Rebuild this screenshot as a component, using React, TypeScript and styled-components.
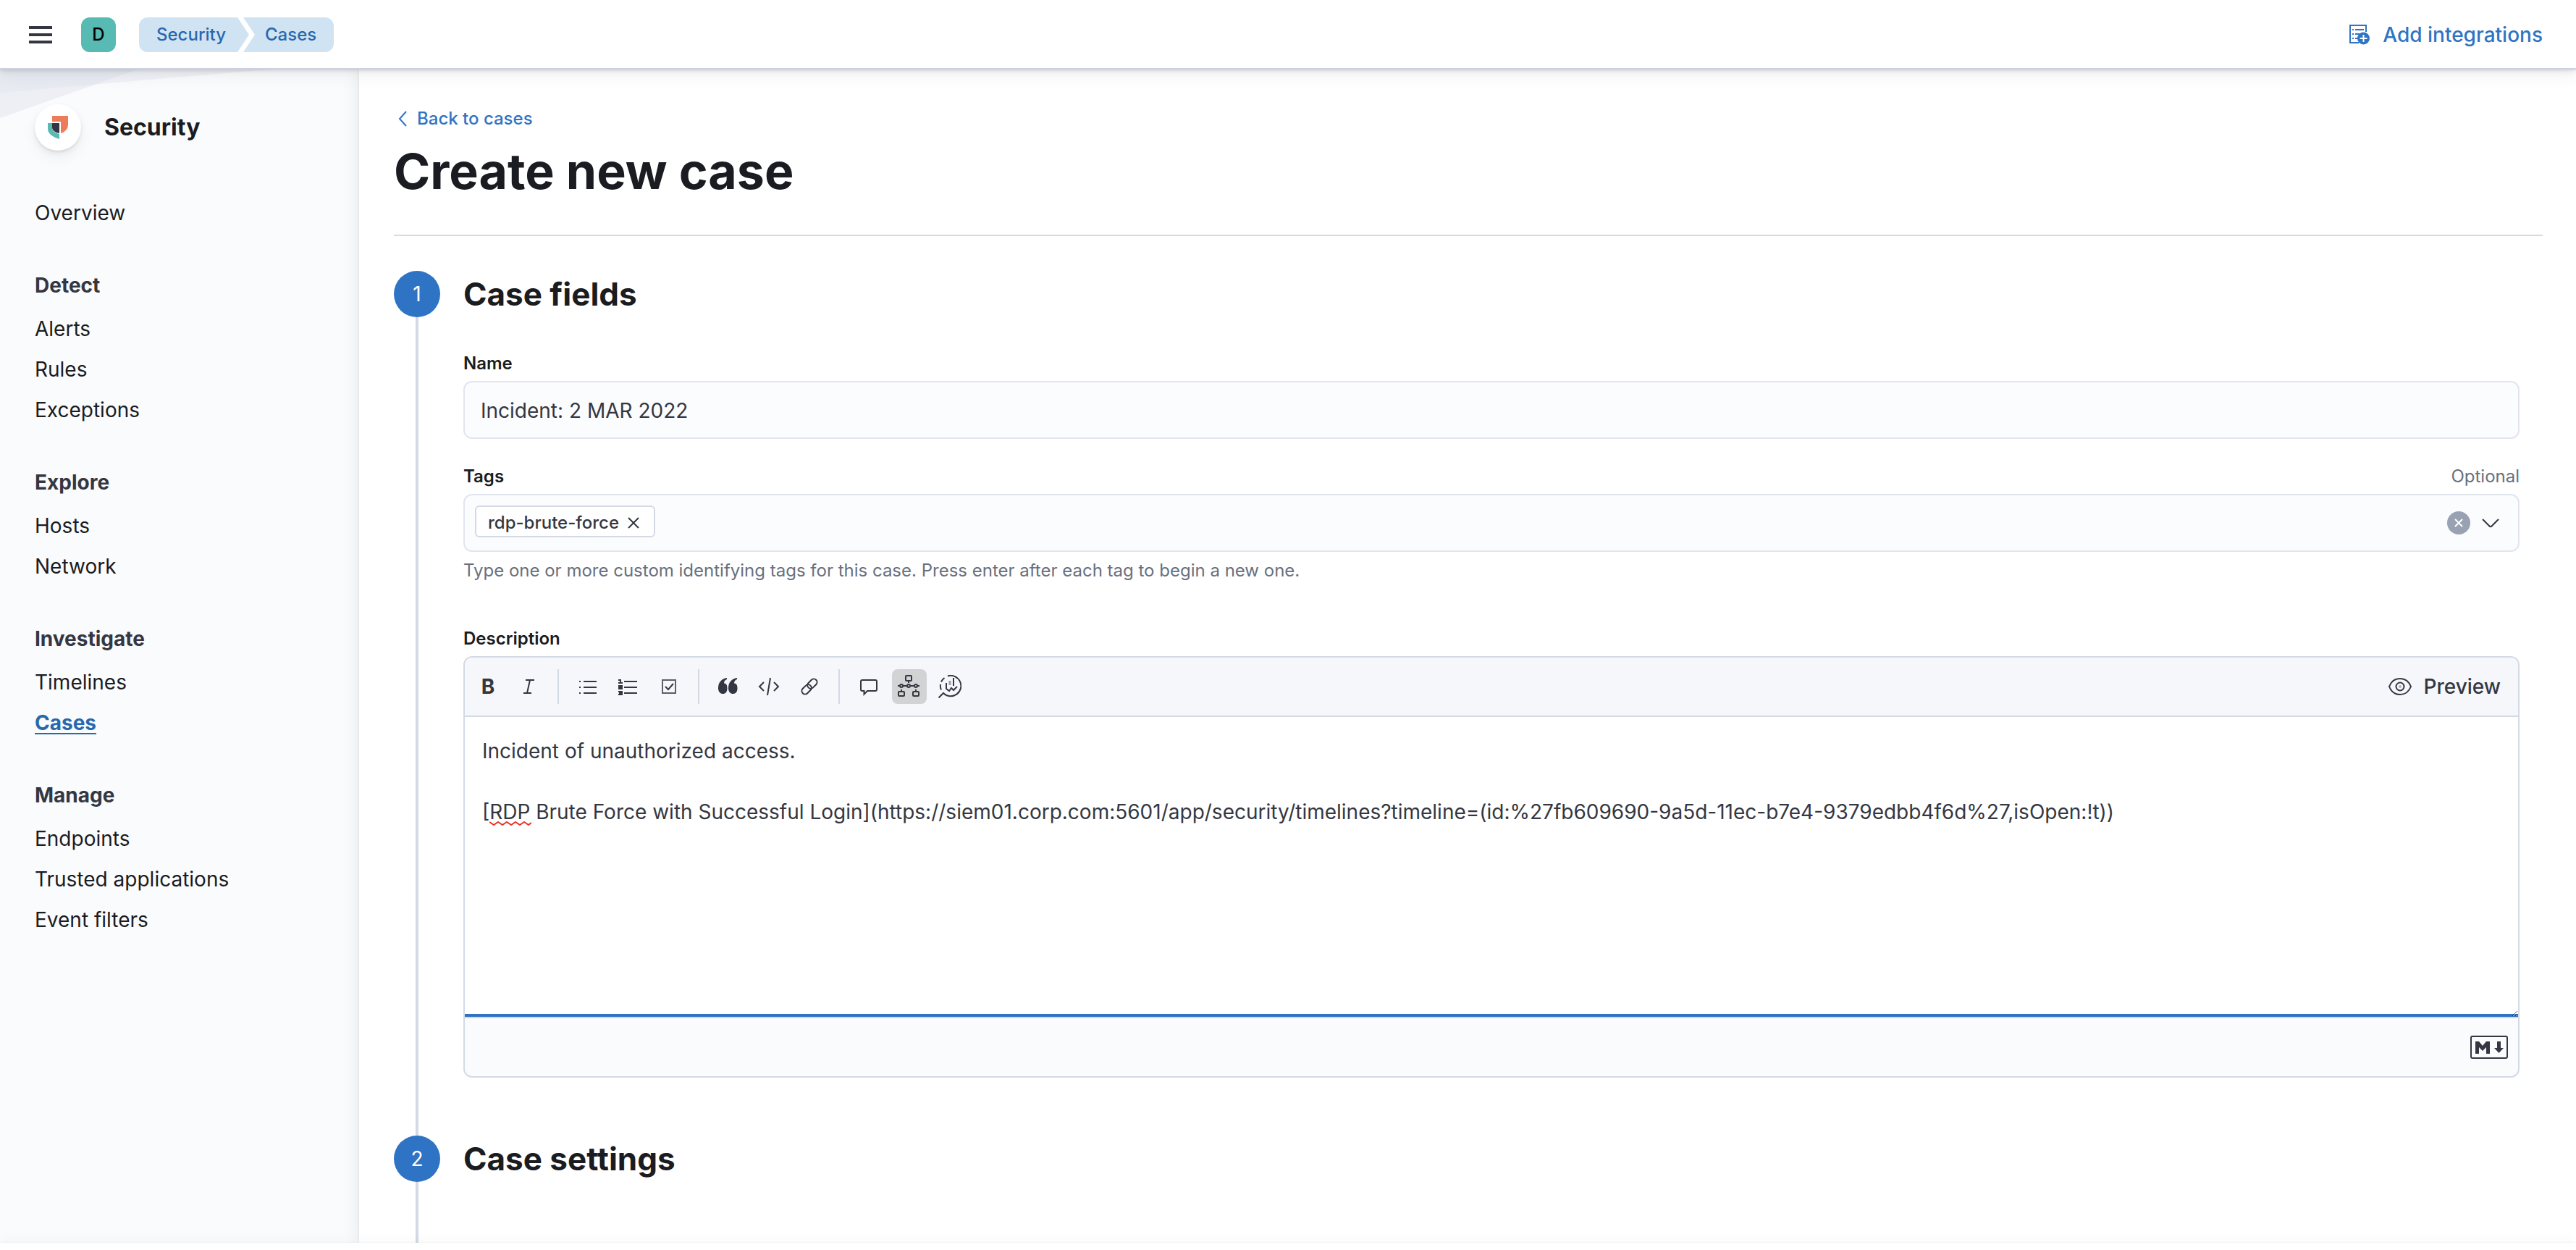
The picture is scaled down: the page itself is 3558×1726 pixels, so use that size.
import React, { useState } from "react";
import styled, { createGlobalStyle } from "styled-components";

const color = {
  ink: "#343741",
  title: "#1a1c21",
  subdued: "#69707d",
  primary: "#2f74c4",
  primaryText: "#2868ae",
  line: "#d3dae6",
  fieldLine: "#e1e5f0",
  field: "#fbfcfd",
  page: "#fafbfd",
};

const GlobalStyle = createGlobalStyle`
  *, *::before, *::after { box-sizing: border-box; }
  body { margin: 0; background: #fff; color: ${color.ink}; font-family: Inter, "Liberation Sans", sans-serif; font-size: 28px; line-height: 42px; }
  button, input, textarea { font: inherit; color: inherit; }
  button { display: inline-flex; align-items: center; justify-content: center; padding: 0; border: 0; background: none; cursor: pointer; }
  a { color: inherit; text-decoration: none; }
  svg { display: block; flex: none; }
  h1, h2, h3, p, ul, ol { margin: 0; padding: 0; }
  ul, ol { list-style: none; }
`;

const Page = styled.div`
  display: flex;
  flex-direction: column;
  height: 100vh;
  overflow: hidden;
`;

/* ---------- Header ---------- */

const Header = styled.header`
  position: relative;
  z-index: 2;
  display: flex;
  flex: none;
  align-items: center;
  gap: 32px;
  padding: 24px 46px 22px 32px;
  background: #fff;
  border-bottom: 2px solid #cbd1de;
  box-shadow: 0 2px 3px rgba(0, 0, 0, 0.07), 0 4px 8px rgba(0, 0, 0, 0.05), 0 10px 20px rgba(0, 0, 0, 0.05);
`;

const MenuButton = styled.button`
  width: 48px;
  height: 48px;
`;

const Avatar = styled.button`
  width: 48px;
  height: 48px;
  border-radius: 12px;
  background: #57bab3;
  color: #000;
  font-size: 24px;
  font-weight: 500;
  line-height: 48px;
`;

const Breadcrumbs = styled.nav`
  display: flex;
  flex: 1;
`;

const Crumb = styled.a<{ $last?: boolean }>`
  padding: ${(p) => (p.$last ? "0 24px 0 30px" : "0 32px 0 24px")};
  margin-left: ${(p) => (p.$last ? "-8px" : "0")};
  border-radius: ${(p) => (p.$last ? "0 12px 12px 0" : "12px 0 0 12px")};
  clip-path: ${(p) =>
    p.$last
      ? "polygon(0 0, 100% 0, 100% 100%, 0 100%, 16px 50%)"
      : "polygon(0 0, calc(100% - 16px) 0, 100% 50%, calc(100% - 16px) 100%, 0 100%)"};
  background: #d0e3f2;
  color: ${color.primaryText};
  font-size: 24px;
  font-weight: 500;
  line-height: 48px;
`;

const AddLink = styled.a`
  display: flex;
  align-items: center;
  gap: 16px;
  color: ${color.primary};
  font-weight: 500;
`;

/* ---------- Side navigation ---------- */

const Body = styled.div`
  display: flex;
  flex: 1;
  min-height: 0;
`;

const Sidebar = styled.aside`
  position: relative;
  flex: none;
  width: 496px;
  padding: 48px;
  background: ${color.page};
`;

const Backdrop = styled.svg`
  position: absolute;
  top: 0;
  left: 0;
`;

const Solution = styled.div`
  position: relative;
  display: flex;
  align-items: center;
  gap: 32px;
  margin-bottom: 58px;
`;

const SolutionLogo = styled.span`
  display: flex;
  align-items: center;
  justify-content: center;
  width: 64px;
  height: 64px;
  border-radius: 50%;
  background: #fff;
  box-shadow: 0 2px 3px rgba(0, 0, 0, 0.07), 0 4px 8px rgba(0, 0, 0, 0.05), 0 10px 20px rgba(0, 0, 0, 0.05);
`;

const SolutionName = styled.h2`
  color: ${color.title};
  font-size: 32px;
  font-weight: 700;
  line-height: 64px;
`;

const NavGroup = styled.section`
  & + & {
    margin-top: 48px;
  }
`;

const NavHeading = styled.h3`
  margin-bottom: 8px;
  font-size: 28px;
  font-weight: 700;
  line-height: 48px;
`;

const NavItem = styled.li`
  line-height: 56px;
`;

const NavLink = styled.a<{ $active?: boolean }>`
  color: ${(p) => (p.$active ? color.primaryText : color.title)};
  font-weight: ${(p) => (p.$active ? 700 : 400)};
  text-decoration: ${(p) => (p.$active ? "underline 2px" : "none")};
  text-underline-offset: 4px;
`;

/* ---------- Main ---------- */

const Main = styled.main`
  position: relative;
  display: flex;
  flex: 1;
  flex-direction: column;
  min-width: 0;
  padding: 48px 46px 0 48px;
  background: #fff;
  box-shadow: 0 0 3px rgba(0, 0, 0, 0.1), 0 0 24px rgba(0, 0, 0, 0.09);
`;

const PageHeader = styled.div`
  padding-bottom: 48px;
  margin-bottom: 48px;
  border-bottom: 2px solid ${color.line};
`;

const BackLink = styled.a`
  display: inline-flex;
  align-items: center;
  gap: 8px;
  margin-bottom: 12px;
  color: ${color.primary};
  font-size: 24px;
  font-weight: 500;
  line-height: 40px;
  vertical-align: top;
`;

const PageTitle = styled.h1`
  color: ${color.title};
  font-size: 68px;
  font-weight: 700;
  line-height: 80px;
`;

const Steps = styled.ol`
  display: flex;
  flex: 1;
  flex-direction: column;
`;

const Step = styled.li`
  display: flex;
  gap: 32px;
  &:last-child {
    flex: 1;
  }
`;

const StepRail = styled.div`
  display: flex;
  flex-direction: column;
  align-items: center;
  &::after {
    content: "";
    flex: 1;
    width: 4px;
    background: ${color.line};
  }
`;

const StepNumber = styled.span`
  width: 64px;
  height: 64px;
  border-radius: 50%;
  background: ${color.primary};
  color: #fff;
  line-height: 64px;
  text-align: center;
`;

const StepContent = styled.div`
  flex: 1;
  min-width: 0;
  padding: 0 32px 80px 0;
`;

const StepTitle = styled.h2`
  margin-bottom: 46px;
  color: ${color.title};
  font-size: 44px;
  font-weight: 700;
  line-height: 64px;
`;

/* ---------- Form ---------- */

const Field = styled.div<{ $gap?: number }>`
  margin-top: ${(p) => p.$gap ?? 0}px;
`;

const LabelRow = styled.div`
  display: flex;
  align-items: flex-start;
  justify-content: space-between;
  margin-bottom: 6px;
`;

const Label = styled.label`
  color: ${color.title};
  font-size: 24px;
  font-weight: 600;
  line-height: 36px;
`;

const Hint = styled.span`
  color: ${color.subdued};
  font-size: 24px;
  line-height: 36px;
`;

const HelpText = styled.p`
  padding-top: 8px;
  color: ${color.subdued};
  font-size: 24px;
  line-height: 36px;
`;

const TextInput = styled.input`
  display: block;
  width: 100%;
  height: 80px;
  padding: 2px 22px 0;
  border: 2px solid ${color.fieldLine};
  border-radius: 12px;
  background: ${color.field};
  outline: 0;
`;

const ComboBox = styled.div`
  display: flex;
  align-items: center;
  gap: 12px;
  height: 80px;
  padding: 0 22px 0 14px;
  border: 2px solid ${color.fieldLine};
  border-radius: 12px;
  background: ${color.field};
`;

const Pill = styled.span`
  display: flex;
  align-items: center;
  gap: 8px;
  height: 44px;
  margin-bottom: 4px;
  padding: 4px 16px 0 16px;
  border: 2px solid ${color.line};
  border-radius: 6px;
  background: #fff;
  font-size: 24px;
  font-weight: 500;
  line-height: 36px;
`;

const ComboInput = styled.input`
  flex: 1;
  min-width: 0;
  border: 0;
  outline: 0;
  background: none;
`;

const Editor = styled.div`
  border: 2px solid ${color.line};
  border-radius: 12px;
  background: ${color.page};
  overflow: hidden;
`;

const Toolbar = styled.div`
  display: flex;
  align-items: center;
  gap: 8px;
  height: 82px;
  padding: 0 8px;
  border-bottom: 2px solid ${color.line};
  background: #f5f7fb;
`;

const ToolButton = styled.button<{ $active?: boolean }>`
  width: 48px;
  height: 48px;
  border-radius: 8px;
  background: ${(p) => (p.$active ? "#d2d3d4" : "transparent")};
  font-weight: 700;
`;

const ToolDivider = styled.span`
  width: 2px;
  height: 48px;
  margin: 0 8px;
  background: ${color.line};
`;

const PreviewButton = styled.button`
  gap: 16px;
  margin-left: auto;
  padding: 0 16px;
  font-weight: 500;
`;

const TextAreaWrap = styled.div`
  position: relative;
`;

const TextArea = styled.textarea`
  display: block;
  width: 100%;
  height: 416px;
  padding: 26px 24px 24px;
  border: 0;
  border-bottom: 2px solid ${color.line};
  outline: 0;
  resize: vertical;
  background: linear-gradient(${color.primary}, ${color.primary}) bottom / 100% 4px no-repeat #fff;
  line-height: 42px;
`;

const SpellingMark = styled.svg`
  position: absolute;
  top: 144px;
  left: 34px;
`;

const EditorFooter = styled.div`
  display: flex;
  align-items: center;
  justify-content: flex-end;
  height: 80px;
  padding: 0 14px;
`;

const BottomBar = styled.footer`
  position: relative;
  flex: none;
  height: 10px;
  background: #fff;
  box-shadow: 0 0 3px rgba(0, 0, 0, 0.08), 0 -4px 16px rgba(0, 0, 0, 0.03);
`;

/* ---------- Icons ---------- */

type IconProps = { children: React.ReactNode; w?: number; h?: number; stroke?: number };

const Icon = ({ children, w = 32, h = 32, stroke = 2 }: IconProps) => (
  <svg width={w} height={h} viewBox={`0 0 ${w} ${h}`} fill="none" stroke="currentColor" strokeWidth={stroke} aria-hidden="true">
    {children}
  </svg>
);

const MenuIcon = () => (
  <Icon stroke={4}>
    <path d="M0 6h32M0 16h32M0 26h32" />
  </Icon>
);

const IntegrationIcon = () => (
  <Icon>
    <path d="M15 27H3V3h22v9" />
    <path d="M6 9h2M6 15h2M6 21h2M10 9h12M10 15h6M10 21h4" />
    <circle cx="21.5" cy="21" r="8.5" fill="currentColor" stroke="none" />
    <path d="M21.5 16v10M16.5 21h10" stroke="#fff" />
  </Icon>
);

const SecurityLogo = () => (
  <Icon>
    <g stroke="none">
      <path d="M8 0h22v12c0 6-4 10-10 12V8H8z" fill="#ed7d5a" />
      <path d="M2 10h6v7c0 3 3 6 10 8v7C8 29 2 24 2 18z" fill="#57bab3" />
      <path d="M8 10h10v14c-6-1-10-4-10-8z" fill="#343741" />
    </g>
  </Icon>
);

const ItalicIcon = () => (
  <Icon>
    <path d="M12 7h12M9 25h11M18 7l-4 18" />
  </Icon>
);

const ListIcon = () => (
  <Icon>
    <path d="M4 9h2M4 17h2M4 25h2M10 9h18M10 17h18M10 25h18" />
  </Icon>
);

const OrderedIcon = () => (
  <Icon>
    <path d="M10 9h18M10 17h18M10 25h18" />
    <path d="M2 7h3v4M2 11h6M2 15h5v2H3v2h5M2 23h5v4H2M3 25h4" />
  </Icon>
);

const CheckIcon = () => (
  <Icon>
    <rect x="7" y="7" width="18" height="18" stroke="#5c5f67" />
    <path d="m11 16 4 4 7-8" />
  </Icon>
);

const QuoteIcon = () => (
  <Icon stroke={0}>
    <g fill="currentColor">
      <path d="M14 4v2c-3 1-4 3-4 5.500 3 0 4.500 2 4.500 7S12 26 8.500 26 2 23.500 2 18C2 10 7 5 14 4z" />
      <path d="M28 4v2c-3 1-4 3-4 5.500 3 0 4.500 2 4.500 7S26 26 22.500 26 16 23.500 16 18c0-8 5-13 12-14z" />
    </g>
  </Icon>
);

const CodeIcon = () => (
  <Icon>
    <path d="m9 10-6 6 6 6M23 10l6 6-6 6M18 4l-4 24" />
  </Icon>
);

const LinkIcon = () => (
  <Icon>
    <g transform="rotate(-45 16 16)">
      <rect x="3" y="11.500" width="15" height="9" rx="4.500" />
      <rect x="14" y="11.500" width="15" height="9" rx="4.500" />
    </g>
  </Icon>
);

const CommentIcon = () => (
  <Icon>
    <path d="M7 7h18a2 2 0 0 1 2 2v11a2 2 0 0 1-2 2H14l-4.500 4.500V22H7a2 2 0 0 1-2-2V9a2 2 0 0 1 2-2z" />
  </Icon>
);

const TimelineIcon = () => (
  <Icon>
    <rect x="11" y="1" width="8" height="7" rx="1" />
    <rect x="1" y="23" width="8" height="6" rx="1" />
    <rect x="21" y="23" width="8" height="6" rx="1" />
    <path d="M15 8v3M5 23v-3M25 23v-3M0 15h3M7 15h6M17 15h6M27 15h3" />
    <circle cx="5" cy="15" r="2" />
    <circle cx="15" cy="15" r="2" />
    <circle cx="25" cy="15" r="2" />
  </Icon>
);

const LensIcon = () => (
  <Icon>
    <path d="M13 1.500A14.200 14.200 0 1 1 7 25l-6.500 6.500M4 20.500A14.200 14.200 0 0 1 3 13M4 9.500A14.200 14.200 0 0 1 8.500 4" />
    <path d="M11 11v8l4 3 3-4 3 3 5-5M21 4v11" />
    <path d="M16 8v6" stroke="#98a2b3" strokeWidth="3" />
  </Icon>
);

const EyeIcon = () => (
  <Icon>
    <path d="M1 16C4 8.500 9.500 5 16 5s12 3.500 15 11c-3 7.500-8.500 11-15 11S4 23.500 1 16z" />
    <circle cx="16" cy="16" r="5.500" />
    <circle cx="16" cy="16" r="2" fill="#b4b7be" stroke="none" />
  </Icon>
);

const MarkdownIcon = () => (
  <Icon w={52} h={32}>
    <rect x="1" y="1" width="50" height="30" rx="2" />
    <path d="M7 25V8h5l5 6 5-6h5v17h-5v-9l-5 5-5-5v9zM37 8h5v9h4l-6.500 7-6.500-7h4z" fill="currentColor" stroke="none" />
  </Icon>
);

/* ---------- Page ---------- */

const navGroups: { title?: string; items: string[] }[] = [
  { items: ["Overview"] },
  { title: "Detect", items: ["Alerts", "Rules", "Exceptions"] },
  { title: "Explore", items: ["Hosts", "Network"] },
  { title: "Investigate", items: ["Timelines", "Cases"] },
  { title: "Manage", items: ["Endpoints", "Trusted applications", "Event filters"] },
];

const tools: ({ label: string; icon: React.ReactNode; active?: boolean } | null)[] = [
  { label: "Bold", icon: "B" },
  { label: "Italic", icon: <ItalicIcon /> },
  null,
  { label: "Unordered list", icon: <ListIcon /> },
  { label: "Ordered list", icon: <OrderedIcon /> },
  { label: "Task list", icon: <CheckIcon /> },
  null,
  { label: "Quote", icon: <QuoteIcon /> },
  { label: "Code", icon: <CodeIcon /> },
  { label: "Link", icon: <LinkIcon /> },
  null,
  { label: "Comment", icon: <CommentIcon /> },
  { label: "Timeline", icon: <TimelineIcon />, active: true },
  { label: "Visualization", icon: <LensIcon /> },
];

const initialDescription =
  "Incident of unauthorized access.\n\n[RDP Brute Force with Successful Login](https://siem01.corp.com:5601/app/security/timelines?timeline=(id:%27fb609690-9a5d-11ec-b7e4-9379edbb4f6d%27,isOpen:!t))";

export default function App() {
  const [name, setName] = useState("Incident: 2 MAR 2022");
  const [description, setDescription] = useState(initialDescription);

  return (
    <Page>
      <GlobalStyle />
      <Header>
        <MenuButton aria-label="Toggle primary navigation">
          <MenuIcon />
        </MenuButton>
        <Avatar aria-label="Default space">D</Avatar>
        <Breadcrumbs aria-label="Breadcrumbs">
          <Crumb href="#security">Security</Crumb>
          <Crumb href="#cases" $last>
            Cases
          </Crumb>
        </Breadcrumbs>
        <AddLink href="#integrations">
          <IntegrationIcon />
          Add integrations
        </AddLink>
      </Header>

      <Body>
        <Sidebar>
          <Backdrop width="370" height="70" aria-hidden="true">
            <path d="M0 0h190L0 67z" fill="#dfe4ec" fillOpacity=".5" />
            <path d="M0 0h370L0 32z" fill="#dfe4ec" fillOpacity=".4" />
          </Backdrop>
          <Solution>
            <SolutionLogo>
              <SecurityLogo />
            </SolutionLogo>
            <SolutionName>Security</SolutionName>
          </Solution>
          <nav aria-label="Security">
            {navGroups.map((group) => (
              <NavGroup key={group.title ?? "top"}>
                {group.title && <NavHeading>{group.title}</NavHeading>}
                <ul>
                  {group.items.map((item) => (
                    <NavItem key={item}>
                      <NavLink href={`#${item}`} $active={item === "Cases"}>
                        {item}
                      </NavLink>
                    </NavItem>
                  ))}
                </ul>
              </NavGroup>
            ))}
          </nav>
        </Sidebar>

        <Main>
          <PageHeader>
            <BackLink href="#cases">
              <Icon w={24} h={24}>
                <path d="m17 2-9 10 9 10" />
              </Icon>
              Back to cases
            </BackLink>
            <PageTitle>Create new case</PageTitle>
          </PageHeader>

          <Steps>
            <Step>
              <StepRail>
                <StepNumber>1</StepNumber>
              </StepRail>
              <StepContent>
                <StepTitle>Case fields</StepTitle>
                <Field>
                  <LabelRow>
                    <Label htmlFor="case-name">Name</Label>
                  </LabelRow>
                  <TextInput id="case-name" value={name} onChange={(e) => setName(e.target.value)} />
                </Field>
                <Field $gap={34}>
                  <LabelRow>
                    <Label htmlFor="case-tags">Tags</Label>
                    <Hint>Optional</Hint>
                  </LabelRow>
                  <ComboBox>
                    <Pill>
                      rdp-brute-force
                      <button aria-label="Remove rdp-brute-force">
                        <Icon w={24} h={24}>
                          <path d="m5 5 14 14M19 5 5 19" />
                        </Icon>
                      </button>
                    </Pill>
                    <ComboInput id="case-tags" aria-describedby="tags-help" />
                    <button aria-label="Clear tags">
                      <Icon>
                        <circle cx="16" cy="16" r="16" fill="#98a2b3" stroke="none" />
                        <path d="m11 11 10 10M21 11 11 21" stroke="#fff" />
                      </Icon>
                    </button>
                    <button aria-label="Open tags list">
                      <Icon>
                        <path d="m5 11 9.500 9.500a2 2 0 0 0 3 0L27 11" />
                      </Icon>
                    </button>
                  </ComboBox>
                  <HelpText id="tags-help">
                    Type one or more custom identifying tags for this case. Press enter after each tag to begin a new one.
                  </HelpText>
                </Field>
                <Field $gap={58}>
                  <LabelRow>
                    <Label htmlFor="case-description">Description</Label>
                  </LabelRow>
                  <Editor>
                    <Toolbar>
                      {tools.map((tool, i) =>
                        tool ? (
                          <ToolButton key={tool.label} aria-label={tool.label} $active={tool.active}>
                            {tool.icon}
                          </ToolButton>
                        ) : (
                          <ToolDivider key={i} />
                        )
                      )}
                      <PreviewButton>
                        <EyeIcon />
                        Preview
                      </PreviewButton>
                    </Toolbar>
                    <TextAreaWrap>
                      <TextArea
                        id="case-description"
                        spellCheck={false}
                        value={description}
                        onChange={(e) => setDescription(e.target.value)}
                      />
                      <SpellingMark width="58" height="6" fill="none" stroke="#ee3124" strokeWidth="2" aria-hidden="true">
                        <path d="M0 1l6 4 6-4 6 4 6-4 6 4 6-4 6 4 6-4 6 4 4-3" />
                      </SpellingMark>
                    </TextAreaWrap>
                    <EditorFooter>
                      <button aria-label="Markdown syntax help">
                        <MarkdownIcon />
                      </button>
                    </EditorFooter>
                  </Editor>
                </Field>
              </StepContent>
            </Step>
            <Step>
              <StepRail>
                <StepNumber>2</StepNumber>
              </StepRail>
              <StepContent>
                <StepTitle>Case settings</StepTitle>
              </StepContent>
            </Step>
          </Steps>
        </Main>
      </Body>
      <BottomBar />
    </Page>
  );
}
